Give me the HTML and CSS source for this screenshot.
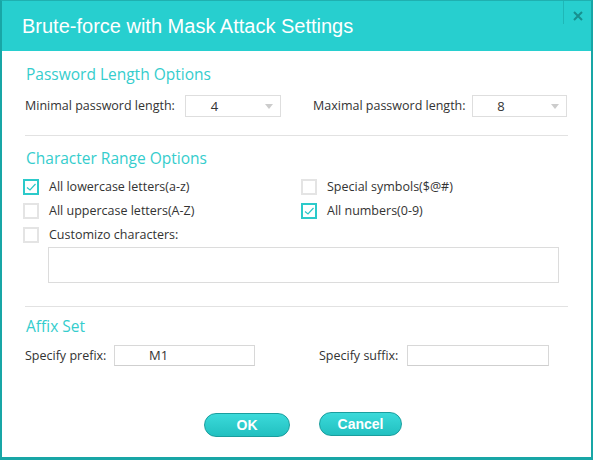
FILE: index.html
```html
<!DOCTYPE html>
<html>
<head>
<meta charset="utf-8">
<link rel="stylesheet" href="styles.css">
</head>
<body>
<div class="window">
  <div class="titlebar">
    <div class="title">Brute-force with Mask Attack Settings</div>
    <div class="close">
      <svg width="10" height="10" viewBox="0 0 10 10"><path d="M1 1 L9 9 M9 1 L1 9" stroke="#17908f" stroke-width="2" fill="none"/></svg>
    </div>
  </div>
  <div class="content">
    <div class="heading h1">Password Length Options</div>
    <div class="len-row">
      <span class="lbl lbl-min">Minimal password length:</span>
      <div class="select sel-min"><span class="val">4</span><span class="arrow"></span></div>
      <span class="lbl lbl-max">Maximal password length:</span>
      <div class="select sel-max"><span class="val">8</span><span class="arrow"></span></div>
    </div>
    <div class="divider d1"></div>
    <div class="heading h2">Character Range Options</div>
    <div class="checks">
      <div class="check"><span class="box on"><svg width="12" height="12" viewBox="0 0 12 12"><path d="M2 6.5 L5 9 L10.5 3" stroke="#2cc6c6" stroke-width="1.2" fill="none"/></svg></span><span class="ctext">All lowercase letters(a-z)</span></div>
      <div class="check"><span class="box"></span><span class="ctext">Special symbols($@#)</span></div>
      <div class="check"><span class="box"></span><span class="ctext">All uppercase letters(A-Z)</span></div>
      <div class="check"><span class="box on"><svg width="12" height="12" viewBox="0 0 12 12"><path d="M2 6.5 L5 9 L10.5 3" stroke="#2cc6c6" stroke-width="1.2" fill="none"/></svg></span><span class="ctext">All numbers(0-9)</span></div>
      <div class="check"><span class="box"></span><span class="ctext">Customizo characters:</span></div>
    </div>
    <div class="textarea"></div>
    <div class="divider d2"></div>
    <div class="heading h3">Affix Set</div>
    <div class="affix-row">
      <span class="lbl lbl-pre">Specify prefix:</span>
      <div class="input in-pre">M1</div>
      <span class="lbl lbl-suf">Specify suffix:</span>
      <div class="input in-suf"></div>
    </div>
    <div class="buttons">
      <div class="btn btn-ok">OK</div>
      <div class="btn btn-cancel">Cancel</div>
    </div>
  </div>
</div>
</body>
</html>
```

FILE: styles.css
```css
* { box-sizing: border-box; }
html, body { margin: 0; padding: 0; background: #ffffff; }
.window {
  width: 593px;
  height: 460px;
  border-left: 2px solid #18a6a6;
  border-right: 2px solid #18a6a6;
  border-bottom: 3px solid #18a6a6;
  border-top: 1px solid #1fb0b0;
  background: #ffffff;
  font-family: "Open Sans", "Noto Sans", sans-serif;
  color: #333333;
}
.titlebar {
  height: 50px;
  background: #27cfcf;
  display: flex;
  align-items: flex-start;
}
.title {
  flex: 1;
  font-family: "Liberation Sans", Arial, sans-serif;
  font-size: 20px;
  color: #ffffff;
  padding-left: 20px;
  padding-top: 14px;
  line-height: 22px;
}
.close {
  width: 28px;
  height: 23px;
  border-left: 1px solid #1fb7b7;
  display: flex;
  align-items: center;
  justify-content: center;
  padding-top: 6px;
}
.content {
  padding: 13px 23px 0 21px;
}
.heading {
  height: 20px;
  line-height: 20px;
  font-size: 15.5px;
  color: #35cdcd;
  padding-left: 3px;
}
.lbl {
  font-size: 12.5px;
  color: #333333;
  line-height: 20px;
}
.len-row {
  margin-top: 11px;
  height: 22px;
  display: flex;
  align-items: center;
}
.lbl-min { width: 162px; padding-left: 2px; }
.lbl-max { width: 159px; margin-left: 32px; }
.select {
  height: 22px;
  border: 1px solid #dedede;
  display: flex;
  align-items: center;
  font-size: 13px;
}
.sel-min { width: 96px; }
.sel-max { width: 95px; }
.select .val { flex: 1; text-align: center; padding-right: 22px; }
.arrow {
  width: 0; height: 0;
  border-left: 4px solid transparent;
  border-right: 4px solid transparent;
  border-top: 5px solid #cccccc;
  margin-right: 7px;
}
.divider { height: 1px; background: #e2e2e2; margin-left: 2px; }
.d1 { margin-top: 18px; }
.h2 { margin-top: 12px; }
.checks {
  margin-top: 7px;
  display: grid;
  grid-template-columns: 278px 1fr;
  grid-auto-rows: 24px;
}
.check { display: flex; align-items: center; }
.box {
  width: 16px; height: 16px;
  border: 2px solid #e4e4e4;
  display: flex; align-items: center; justify-content: center;
}
.box.on { border-color: #2ccaca; }
.ctext { margin-left: 10px; font-size: 12.5px; line-height: 20px; }
.textarea {
  margin-left: 25px;
  width: 511px;
  height: 36px;
  border: 1px solid #dcdcdc;
}
.d2 { margin-top: 23px; }
.h3 { margin-top: 9px; }
.affix-row {
  margin-top: 9px;
  height: 21px;
  display: flex;
  align-items: center;
}
.lbl-pre { width: 91px; padding-left: 2px; }
.lbl-suf { width: 88px; margin-left: 64px; }
.input {
  height: 21px;
  border: 1px solid #d8d8d8;
  border-bottom-color: #cfcfcf;
  font-size: 13px;
  line-height: 19px;
}
.in-pre { width: 141px; padding-left: 34px; }
.in-suf { width: 142px; }
.buttons {
  margin-top: 46px;
  display: flex;
  gap: 29px;
  padding-left: 181px;
}
.btn {
  height: 24px;
  border: 1px solid #1a9e9e;
  border-radius: 12px;
  background: linear-gradient(#3bdada, #22c0c0);
  color: #ffffff;
  font-family: "Liberation Sans", Arial, sans-serif;
  font-weight: bold;
  font-size: 14px;
  line-height: 22px;
  text-align: center;
}
.btn-ok { width: 86px; margin-top: 1px; }
.btn-cancel { width: 83px; }
```
